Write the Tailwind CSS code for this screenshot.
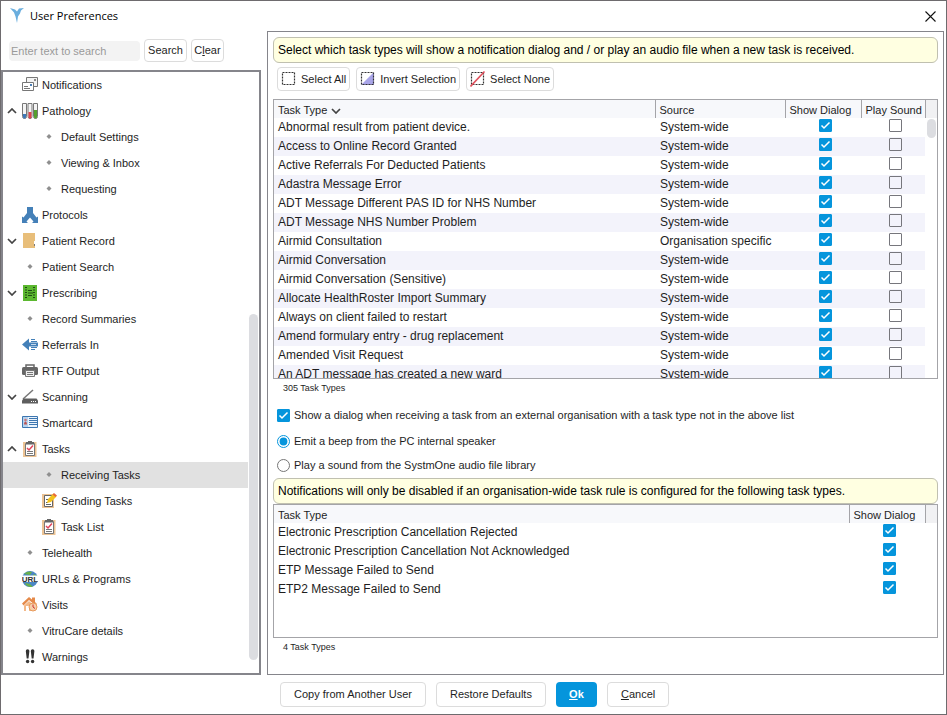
<!DOCTYPE html>
<html lang="en">
<head>
    <meta charset="UTF-8">
    <meta content="width=device-width, initial-scale=1.0" name="viewport">
    <title>User Preferences</title>
    <script src="https://cdn.jsdelivr.net/npm/@tailwindcss/browser@4"></script>
</head>
<body class="bg-white font-['Liberation_Sans',Arial,sans-serif] text-[11px] text-[#1e1e1e]">
    <!-- Shared icons -->
    <svg class="hidden">
        <symbol id="up" viewBox="0 0 10 6"><path d="M1 5l4-4 4 4" fill="none" stroke="#444" stroke-width="1.7"/></symbol>
        <symbol id="down" viewBox="0 0 10 6"><path d="M1 1l4 4 4-4" fill="none" stroke="#444" stroke-width="1.7"/></symbol>
        <symbol id="tick" viewBox="0 0 13 13"><path d="M2.500 6.500L5 9l5.500-5.500" fill="none" stroke="#fff" stroke-width="1.500"/></symbol>
        <symbol id="dot" viewBox="0 0 16 16"><path d="M8 5l2.500 2.500L8 10 5.500 7.500z" fill="#8f8f8f"/></symbol>
        <symbol id="notifications" viewBox="0 0 16 16">
            <path d="M4.500 .5h11v9h-11z" fill="#f4f4f4" stroke="#777"/>
            <path d="M12 2h2v2h-2z" fill="#8a8a8a"/>
            <path d="M.5 5.500h11v8H.5z" fill="#fff" stroke="#777"/>
            <path d="M2 9.500h4M2 11.500h6" stroke="#777"/><path d="M8 7h2v2H8z" fill="#4a7fb8"/>
        </symbol>
        <symbol id="pathology" viewBox="0 0 16 16">
            <g fill="#f4f4f4" stroke="#777"><path d="M.5.5h4v13a2 2 0 0 1-4 0zM6 .5h4v13a2 2 0 0 1-4 0zM11.500.5h4v13a2 2 0 0 1-4 0z"/></g>
            <path d="M1 11h3v3a1.500 1.500 0 0 1-3 0z" fill="#3d78b8"/>
            <path d="M6.500 9h3v5a1.500 1.500 0 0 1-3 0z" fill="#e0444c"/>
            <path d="M12 7h3v7a1.500 1.500 0 0 1-3 0z" fill="#55a02d"/>
        </symbol>
        <symbol id="protocols" viewBox="0 0 16 16">
            <path d="M5 0h6v6l3.500 4.500L16 9.500V16h-6l1.500-1.500L8 10.500l-3.500 4L6 16H0V9.500l1.500 1L5 6z" fill="#4480b8"/>
        </symbol>
        <symbol id="record" viewBox="0 0 16 16"><path d="M1 0h12v15H1z" fill="#e8be7a"/><path d="M12.500 8v5" stroke="#fff"/><path d="M12.500 11v2" stroke="#777"/></symbol>
        <symbol id="prescribing" viewBox="0 0 16 16">
            <path d="M1 0h14v16H1z" fill="#5cb830"/>
            <path d="M3 2.500h2M3 5h2M3 7.500h2M3 10h2M3 12.500h2M11 2.500h2M11 5h2M11 7.500h2M11 10h2M11 12.500h2M6 5.500h4M6 8h5M6 10.500h4" stroke="#1e4a14" stroke-width="1.200"/>
        </symbol>
        <symbol id="referrals" viewBox="0 0 16 16">
            <path d="M0 7.500L7 1.500v4h9v4H7v4z" fill="#4480b8"/>
            <path d="M9 2.500h4M9 4.500h6M9 10.500h6M9 12.500h4" stroke="#4480b8"/><path d="M9 7.500h5" stroke="#c5d8ea"/>
        </symbol>
        <symbol id="printer" viewBox="0 0 16 16">
            <path d="M4 5V2h8v3" fill="#fff" stroke="#666" stroke-width="1.500"/>
            <rect y="4" width="16" height="8" rx="1.500" fill="#666"/>
            <path d="M3.500 7.500h9v6h-9z" fill="#eee" stroke="#777"/><path d="M5 9.500h6M5 11.500h6" stroke="#777"/>
        </symbol>
        <symbol id="scanner" viewBox="0 0 16 16">
            <path d="M1 10L11 1" stroke="#777" stroke-width="1.500"/><path d="M1.500 9.500h13l1.500 2v3H0v-3z" fill="#5e5e5e"/>
            <path d="M9 12.500h1M11 12.500h1M13 12.500h1" stroke="#fff"/>
        </symbol>
        <symbol id="smartcard" viewBox="0 0 16 16">
            <path d="M.5 1.500h15v11H.5z" fill="#eaf3fc" stroke="#3d76b0"/>
            <path d="M1 2h5v10H1z" fill="#b7d3ee"/><circle cx="3.500" cy="5" r="1.300" fill="#c77"/><path d="M2 9.500c0-4 3-4 3 0z" fill="#b55"/>
            <path d="M7 3.500h8M7 5.500h8M7 7.500h8M7 9.500h8" stroke="#3d76b0"/>
        </symbol>
        <symbol id="tasks" viewBox="0 0 16 16">
            <path d="M1 1h13.500v15H1z" fill="#edc495"/><path d="M3.500 2.500h9v12h-9z" fill="#fff" stroke="#777"/>
            <path d="M4 1h2V0h4v1h2v2.500H4z" fill="#666"/>
            <path d="M5 7l2 2L11 4.500" fill="none" stroke="#e0445a" stroke-width="1.500"/><path d="M5 10.500h6M5 12.500h6" stroke="#777"/>
        </symbol>
        <symbol id="sending" viewBox="0 0 16 16">
            <path d="M1 1h12v14H1z" fill="#edc495"/><path d="M3.500 2.500h8v11h-8z" fill="#fff" stroke="#666"/>
            <path d="M5 6.500h2M5 9.500h2M5 11.500h5" stroke="#666"/>
            <path d="M6 10l1-4 5.500-5.500L15.500 3.500 10 9z" fill="#f2c21c"/><path d="M11.500 1.500L13 0l3 2.500-1.500 1.500z" fill="#e8683c"/>
        </symbol>
        <symbol id="url" viewBox="0 0 16 16">
            <circle cx="8" cy="8" r="8" fill="#4a86c4"/><path d="M2 3c3-3 6-3 8-2L8 4zM3 12l5 1 3 3c-4 .5-7-1-8-4zM12 3l3 2h-4z" fill="#6ab04a"/>
            <path d="M0 4.500h16v6.500H0z" fill="#fff"/>
            <text x="8" y="10.500" text-anchor="middle" font-size="8" font-weight="bold" fill="#333">URL</text>
        </symbol>
        <symbol id="visits" viewBox="0 0 16 16">
            <path d="M0 6.500L7 0l3 2.500V.5h3v4.500l2 2-1.500 1.500L7 3 1.500 8.500z" fill="#e58a4a"/>
            <path d="M2 8.500l5-4.500 5 4.500V14H2z" fill="#f3b98a"/><path d="M4 9h3v5H4z" fill="#fff"/>
            <circle cx="11" cy="10" r="4" fill="#f6cfa8" stroke="#e89a5c"/><path d="M11 7.500V10l2 1.500" stroke="#c33" fill="none"/>
        </symbol>
        <symbol id="warnings" viewBox="0 0 16 16">
            <path d="M3.800 2a1.800 1.800 0 0 1 3.600 0L6.500 9.500H4.700zM8.800 2a1.800 1.800 0 0 1 3.600 0l-.9 7.500H9.700z" fill="#333"/>
            <circle cx="5.600" cy="12.500" r="1.700" fill="#333"/><circle cx="10.600" cy="12.500" r="1.700" fill="#333"/>
        </symbol>
    </svg>

    <div class="flex min-h-screen flex-col border border-[#6e6b6e]">
        <header class="flex h-[30px] items-center pl-2 pr-[9px]">
            <svg class="size-4" viewBox="0 0 16 16"><path d="M1 0l5 1.500 2 2 2-3 5-.5-3 2.500-1 3-2 3-1 6.500-1.500-6.500L5 4.500z" fill="#6aaede"/></svg>
            <h1 class="ml-[5px] grow font-['Open_Sans',sans-serif] text-[11px] text-black">User Preferences</h1>
            <button class="p-px" aria-label="Close"><svg class="size-[11px]" viewBox="0 0 11 11"><path d="M.5.5l10 10M10.500.5l-10 10" stroke="#111" stroke-width="1.100"/></svg></button>
        </header>

        <main class="flex grow gap-[6px] pr-[2px]">
            <div class="flex w-[260px] shrink-0 flex-col">
                <form class="flex items-center gap-1 py-2 pl-2">
                    <input class="h-5 w-[131px] rounded bg-[#f3f3f3] pl-[2px] placeholder:text-[#9a9a9a]" type="text" placeholder="Enter text to search" aria-label="Search preferences">
                    <button class="h-[23px] w-[43px] rounded border border-[#dcdcdc]" type="button">Search</button>
                    <button class="h-[23px] w-[33px] rounded border border-[#dcdcdc]" type="button">C<u>l</u>ear</button>
                </form>
                <nav class="relative grow border-2 border-[#85858b] pb-[3px]">
                    <ul id="tree" class="mr-[11px]"></ul>
                    <div class="absolute bottom-[13px] right-[1px] h-[346px] w-[9px] rounded-full bg-[#dcdde1]"></div>
                </nav>
            </div>

            <section class="min-w-0 grow border border-[#85858b] p-[5px]">
                <p class="flex h-[26px] items-center rounded-md border border-[#c0c0b0] bg-[#ffffe1] pl-1 text-xs text-black">Select which task types will show a notification dialog and / or play an audio file when a new task is received.</p>

                <div class="mt-1 flex gap-[6px] pl-1">
                    <button class="flex h-6 items-center gap-1 rounded border border-[#dcdcdc] px-[3px]">
                        <svg class="size-4" viewBox="0 0 16 16"><path d="M1.500 1.500h12v12h-12z" fill="none" stroke="#333" stroke-width="1.200" stroke-dasharray="2 1"/></svg>Select All
                    </button>
                    <button class="flex h-6 items-center gap-1 rounded border border-[#dcdcdc] px-[3px]">
                        <svg class="size-4" viewBox="0 0 16 16"><path d="M14 1v13H1z" fill="#a9a5e8"/><path d="M1.500 1.500h12v12h-12z" fill="none" stroke="#333" stroke-width="1.200" stroke-dasharray="2 1"/></svg>Invert Selection
                    </button>
                    <button class="flex h-6 items-center gap-1 rounded border border-[#dcdcdc] px-[3px]">
                        <svg class="size-4" viewBox="0 0 16 16"><path d="M1.500 1.500h12v12h-12z" fill="none" stroke="#333" stroke-width="1.200" stroke-dasharray="2 1"/><path d="M.5 15.500l14-15" stroke="#e0505c" stroke-width="1.600"/></svg>Select None
                    </button>
                </div>

                <div class="relative mt-2 h-[280px] overflow-hidden border border-[#a4a4a8]">
                    <table class="w-full table-fixed text-xs">
                        <thead class="bg-[#f7f8fb] text-left text-[11px]">
                            <tr class="h-[18px]">
                                <th class="pl-1 pt-[2px] font-normal leading-4">Task Type <svg class="ml-px inline h-[6px] w-[10px]"><use href="#down"/></svg></th>
                                <th class="w-[130px] border-l border-[#a4a4a8] pl-1 pt-[2px] font-normal leading-4">Source</th>
                                <th class="w-[76px] border-l border-[#a4a4a8] pl-1 pt-[2px] font-normal leading-4">Show Dialog</th>
                                <th class="w-[64px] whitespace-nowrap border-l border-[#a4a4a8] pl-1 pt-[2px] font-normal leading-4">Play Sound</th>
                                <th class="w-[12px] border-l border-[#a4a4a8] bg-[#f1f1f3]"></th>
                            </tr>
                        </thead>
                        <tbody id="types"></tbody>
                    </table>
                    <div class="absolute right-[1px] top-[19px] h-[19px] w-[9px] rounded-full bg-[#dcdde1]"></div>
                </div>
                <p class="mt-px pl-[10px] text-[9px] leading-4">305 Task Types</p>

                <label class="mt-[6px] flex h-[26px] items-center gap-1 pl-1">
                    <span class="relative">
                        <input class="peer block size-[13px] appearance-none rounded-[1px] border border-[#76767c] checked:border-[#0595dc] checked:bg-[#0595dc]" type="checkbox" checked>
                        <svg class="pointer-events-none absolute inset-0 hidden size-[13px] peer-checked:block"><use href="#tick"/></svg>
                    </span>
                    Show a dialog when receiving a task from an external organisation with a task type not in the above list
                </label>
                <label class="flex h-[26px] items-center gap-1 pl-1"><input class="size-[13px] accent-[#0595dc]" type="radio" name="sound" checked>Emit a beep from the PC internal speaker</label>
                <label class="flex h-[22px] items-center gap-1 pl-1"><input class="size-[13px] accent-[#0595dc]" type="radio" name="sound">Play a sound from the SystmOne audio file library</label>

                <p class="mt-[2px] flex h-[26px] items-center rounded-md border border-[#c0c0b0] bg-[#ffffe1] pl-1 text-xs text-black">Notifications will only be disabled if an organisation-wide task rule is configured for the following task types.</p>
                <div class="h-[134px] overflow-hidden border border-[#a4a4a8]">
                    <table class="w-full table-fixed text-xs">
                        <thead class="bg-[#f7f8fb] text-left text-[11px]">
                            <tr class="h-[18px]">
                                <th class="pl-1 pt-[2px] font-normal leading-4">Task Type</th>
                                <th class="w-[76px] border-l border-[#a4a4a8] pl-1 pt-[2px] font-normal leading-4">Show Dialog</th>
                                <th class="w-[12px] border-l border-[#a4a4a8] bg-[#f1f1f3]"></th>
                            </tr>
                        </thead>
                        <tbody id="rules"></tbody>
                    </table>
                </div>
                <p class="mt-px pl-[10px] text-[9px] leading-4">4 Task Types</p>
            </section>
        </main>

        <footer class="flex gap-[10px] py-[7px] pl-[279px]">
            <button class="h-[25px] rounded border border-[#dcdcdc] px-[13px]">Copy from Another User</button>
            <button class="h-[25px] rounded border border-[#dcdcdc] px-[13px]">Restore Defaults</button>
            <button class="h-[25px] w-[41px] rounded bg-[#0595dc] font-bold text-white"><u>O</u>k</button>
            <button class="h-[25px] rounded border border-[#dcdcdc] px-[13px]"><u>C</u>ancel</button>
        </footer>
    </div>

    <script>
        // label, icon, indent level, chevron
        const tree = [
            ['Notifications', 'notifications', 0],
            ['Pathology', 'pathology', 0, 'up'],
            ['Default Settings', 'dot', 1],
            ['Viewing &amp; Inbox', 'dot', 1],
            ['Requesting', 'dot', 1],
            ['Protocols', 'protocols', 0],
            ['Patient Record', 'record', 0, 'down'],
            ['Patient Search', 'dot', 0],
            ['Prescribing', 'prescribing', 0, 'down'],
            ['Record Summaries', 'dot', 0],
            ['Referrals In', 'referrals', 0],
            ['RTF Output', 'printer', 0],
            ['Scanning', 'scanner', 0, 'down'],
            ['Smartcard', 'smartcard', 0],
            ['Tasks', 'tasks', 0, 'up'],
            ['Receiving Tasks', 'dot', 1],
            ['Sending Tasks', 'sending', 1],
            ['Task List', 'tasks', 1],
            ['Telehealth', 'dot', 0],
            ['URLs &amp; Programs', 'url', 0],
            ['Visits', 'visits', 0],
            ['VitruCare details', 'dot', 0],
            ['Warnings', 'warnings', 0],
        ];
        document.getElementById('tree').innerHTML = tree.map(([label, icon, level, chevron]) => `
            <li class="flex h-[26px] items-center ${level ? 'pl-[19px]' : ''} ${label === 'Receiving Tasks' ? 'bg-[#e1e1e1]' : ''}">
                <span class="w-[19px] shrink-0 pl-1">${chevron ? `<svg class="h-[6px] w-[10px]"><use href="#${chevron}"/></svg>` : ''}</span>
                <svg class="mr-1 size-4 shrink-0"><use href="#${icon}"/></svg>
                <a href="#">${label}</a>
            </li>`).join('');

        const types = [
            'Abnormal result from patient device.',
            'Access to Online Record Granted',
            'Active Referrals For Deducted Patients',
            'Adastra Message Error',
            'ADT Message Different PAS ID for NHS Number',
            'ADT Message NHS Number Problem',
            'Airmid Consultation',
            'Airmid Conversation',
            'Airmid Conversation (Sensitive)',
            'Allocate HealthRoster Import Summary',
            'Always on client failed to restart',
            'Amend formulary entry - drug replacement',
            'Amended Visit Request',
            'An ADT message has created a new ward',
        ];
        const box = (label, checked, stripe) => `
            <td class="pl-1 pt-px align-top ${stripe}">
                <div class="relative mx-auto w-[13px]">
                    <input class="peer block size-[13px] appearance-none rounded-[1px] border border-[#76767c] checked:border-[#0595dc] checked:bg-[#0595dc]" type="checkbox" aria-label="${label}" ${checked ? 'checked' : ''}>
                    <svg class="pointer-events-none absolute inset-0 hidden size-[13px] peer-checked:block"><use href="#tick"/></svg>
                </div>
            </td>`;

        document.getElementById('types').innerHTML = types.map((name, i) => {
            const stripe = i % 2 ? 'bg-[#f3f3fb]' : '';
            return `
            <tr class="h-[19px]">
                <td class="truncate pl-1 leading-[19px] ${stripe}">${name}</td>
                <td class="pl-[5px] leading-[19px] ${stripe}">${name === 'Airmid Consultation' ? 'Organisation specific' : 'System-wide'}</td>
                ${box('Show dialog', true, stripe)}
                ${box('Play sound', false, stripe)}
                <td></td>
            </tr>`;
        }).join('');

        const rules = [
            'Electronic Prescription Cancellation Rejected',
            'Electronic Prescription Cancellation Not Acknowledged',
            'ETP Message Failed to Send',
            'ETP2 Message Failed to Send',
        ];
        document.getElementById('rules').innerHTML = rules.map((name) => `
            <tr class="h-[19px]">
                <td class="truncate pl-1 leading-[19px]">${name}</td>
                ${box('Show dialog', true, '')}
                <td></td>
            </tr>`).join('');
    </script>
</body>
</html>
